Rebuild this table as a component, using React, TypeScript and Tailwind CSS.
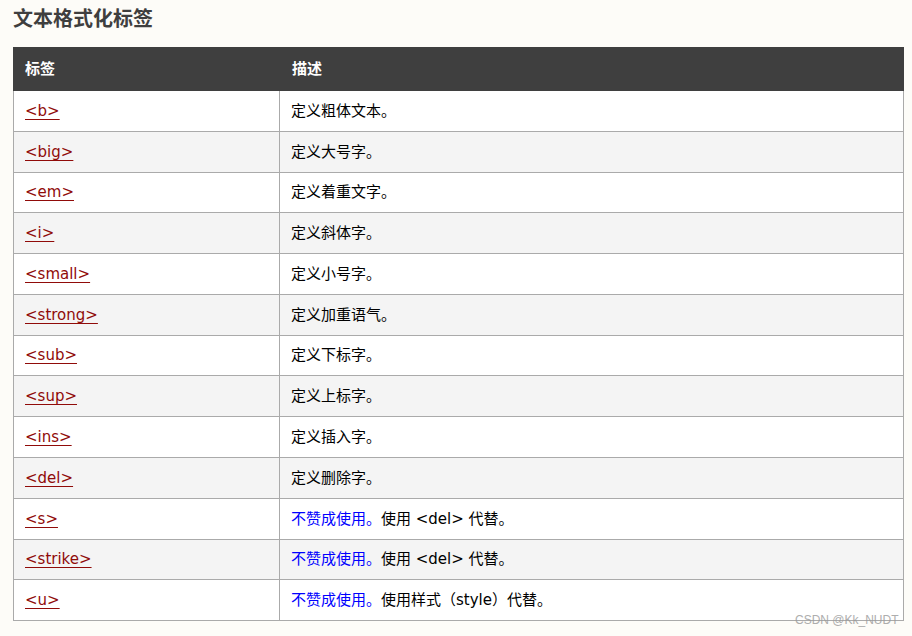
import React from "react";

type Row = { tag: string; desc: React.ReactNode; h: string; alt: boolean };

const dep = <span className="text-[#0000ff]">不赞成使用。</span>;

const rows: Row[] = [
  { tag: "<b>", desc: "定义粗体文本。", h: "h-[41px]", alt: false },
  { tag: "<big>", desc: "定义大号字。", h: "h-[41px]", alt: true },
  { tag: "<em>", desc: "定义着重文字。", h: "h-[40px]", alt: false },
  { tag: "<i>", desc: "定义斜体字。", h: "h-[41px]", alt: true },
  { tag: "<small>", desc: "定义小号字。", h: "h-[41px]", alt: false },
  { tag: "<strong>", desc: "定义加重语气。", h: "h-[41px]", alt: true },
  { tag: "<sub>", desc: "定义下标字。", h: "h-[40px]", alt: false },
  { tag: "<sup>", desc: "定义上标字。", h: "h-[41px]", alt: true },
  { tag: "<ins>", desc: "定义插入字。", h: "h-[41px]", alt: false },
  { tag: "<del>", desc: "定义删除字。", h: "h-[41px]", alt: true },
  { tag: "<s>", desc: <>{dep}使用 &lt;del&gt; 代替。</>, h: "h-[41px]", alt: false },
  { tag: "<strike>", desc: <>{dep}使用 &lt;del&gt; 代替。</>, h: "h-[40px]", alt: true },
  { tag: "<u>", desc: <>{dep}使用样式（style）代替。</>, h: "h-[41px]", alt: false },
];

export default function App() {
  return (
    <div
      className="relative w-[912px] h-[636px] bg-[#fdfcf8] overflow-hidden"
      style={{ fontFamily: '"DejaVu Sans", "Noto Sans CJK SC", sans-serif' }}
    >
      <div className="pl-[13px] pt-[6px]">
        <h1 className="text-[20px] leading-[26px] font-bold text-[#3f3f3f] h-[41px]">
          文本格式化标签
        </h1>
        <div className="w-[891px]">
          <div className="flex h-[44px] bg-[#3f3f3f] text-white font-bold text-[15px] items-center">
            <div className="w-[267px] pl-[12px]">标签</div>
            <div className="pl-[12px]">描述</div>
          </div>
          {rows.map((r, i) => (
            <div
              key={i}
              className={`flex ${r.h} border-l border-r border-b border-[#aaaaaa] ${
                r.alt ? "bg-[#f4f4f4]" : "bg-white"
              } text-[15px] text-black`}
            >
              <div className="w-[266px] pl-[11px] border-r border-[#aaaaaa] flex items-center">
                <a
                  href="#"
                  className="text-[#900b09] underline underline-offset-[3px] decoration-[#900b09]"
                >
                  {r.tag}
                </a>
              </div>
              <div className="pl-[11px] flex items-center">{r.desc}</div>
            </div>
          ))}
        </div>
      </div>
      <div
        className="absolute left-[795px] top-[612px] text-[12px] leading-[16px] text-[#9a9a9a] opacity-80"
        style={{ fontFamily: '"Liberation Sans", Arial, sans-serif' }}
      >
        CSDN @Kk_NUDT
      </div>
    </div>
  );
}
